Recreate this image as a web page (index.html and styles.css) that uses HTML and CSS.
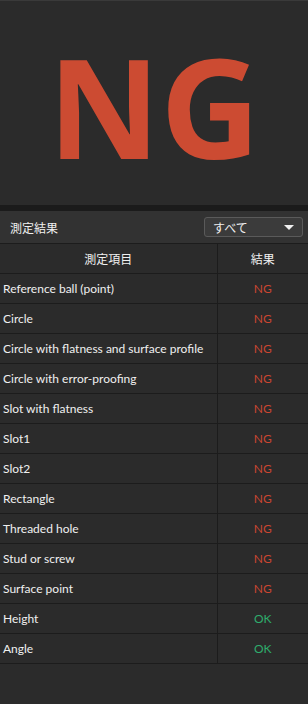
FILE: index.html
```html
<!DOCTYPE html>
<html lang="ja">
<head>
    <meta charset="UTF-8">
    <meta name="viewport" content="width=device-width, initial-scale=1.0">
    <title>測定結果</title>
    <link rel="stylesheet" href="styles.css">
</head>
<body>
    <div class="verdict">
        <span class="verdict-text">NG</span>
    </div>

    <div class="toolbar">
        <span class="toolbar-title">測定結果</span>
        <div class="select">
            <span>すべて</span>
            <span class="caret"></span>
        </div>
    </div>

    <table class="results">
        <thead>
            <tr><th>測定項目</th><th>結果</th></tr>
        </thead>
        <tbody>
            <tr><td>Reference ball (point)</td><td class="ng">NG</td></tr>
            <tr><td>Circle</td><td class="ng">NG</td></tr>
            <tr><td>Circle with flatness and surface profile</td><td class="ng">NG</td></tr>
            <tr><td>Circle with error-proofing</td><td class="ng">NG</td></tr>
            <tr><td>Slot with flatness</td><td class="ng">NG</td></tr>
            <tr><td>Slot1</td><td class="ng">NG</td></tr>
            <tr><td>Slot2</td><td class="ng">NG</td></tr>
            <tr><td>Rectangle</td><td class="ng">NG</td></tr>
            <tr><td>Threaded hole</td><td class="ng">NG</td></tr>
            <tr><td>Stud or screw</td><td class="ng">NG</td></tr>
            <tr><td>Surface point</td><td class="ng">NG</td></tr>
            <tr><td>Height</td><td class="ok">OK</td></tr>
            <tr><td>Angle</td><td class="ok">OK</td></tr>
        </tbody>
    </table>
</body>
</html>
```

FILE: styles.css
```css
body {
    margin: 0;
    height: 704px;
    background: #2b2b2b;
    color: #f0f0f0;
    font-family: Lato, "Noto Sans CJK JP", sans-serif;
    font-size: 12px;
    overflow: hidden;
}

/* Big verdict panel */
.verdict {
    height: 211px;
    box-sizing: border-box;
    border-top: 1px solid #3a3a3a;
    border-bottom: 6px solid #1b1b1b;
    display: flex;
    justify-content: center;
    align-items: center;
}

.verdict-text {
    color: #cc4b32;
    font-family: "Open Sans", sans-serif;
    font-weight: 700;
    font-size: 138px;
    line-height: 1;
    margin-top: 4px;
}

/* Filter bar */
.toolbar {
    height: 32px;
    background: #323232;
    display: flex;
    align-items: center;
    justify-content: space-between;
    padding: 0 5px 0 10px;
}

.toolbar-title {
    font-family: "Noto Sans CJK JP", sans-serif;
}

.select {
    width: 99px;
    height: 20px;
    box-sizing: border-box;
    border: 1px solid #5a5a5a;
    border-radius: 3px;
    background: #3b3b3b;
    display: flex;
    align-items: center;
    justify-content: space-between;
    padding: 0 8px;
    font-family: "Noto Sans CJK JP", sans-serif;
}

.caret {
    width: 0;
    height: 0;
    border-left: 5px solid transparent;
    border-right: 5px solid transparent;
    border-top: 5px solid #f0f0f0;
}

/* Results table */
.results {
    width: 100%;
    table-layout: fixed;
    border-collapse: collapse;
    background: #2b2b2b;
}

.results th,
.results td {
    height: 30px;
    padding: 0;
    border-top: 1px solid #1c1c1c;
    border-bottom: 1px solid #1c1c1c;
    box-sizing: border-box;
    white-space: nowrap;
    overflow: hidden;
}

.results th {
    font-weight: 400;
    font-family: "Noto Sans CJK JP", sans-serif;
    text-align: center;
}

.results th:first-child,
.results td:first-child {
    width: 217px;
    border-right: 1px solid #1c1c1c;
}

.results td:first-child {
    padding-left: 3px;
}

.results td:last-child {
    text-align: center;
}

.ng {
    color: #cc4631;
}

.ok {
    color: #2fac6c;
}
```
